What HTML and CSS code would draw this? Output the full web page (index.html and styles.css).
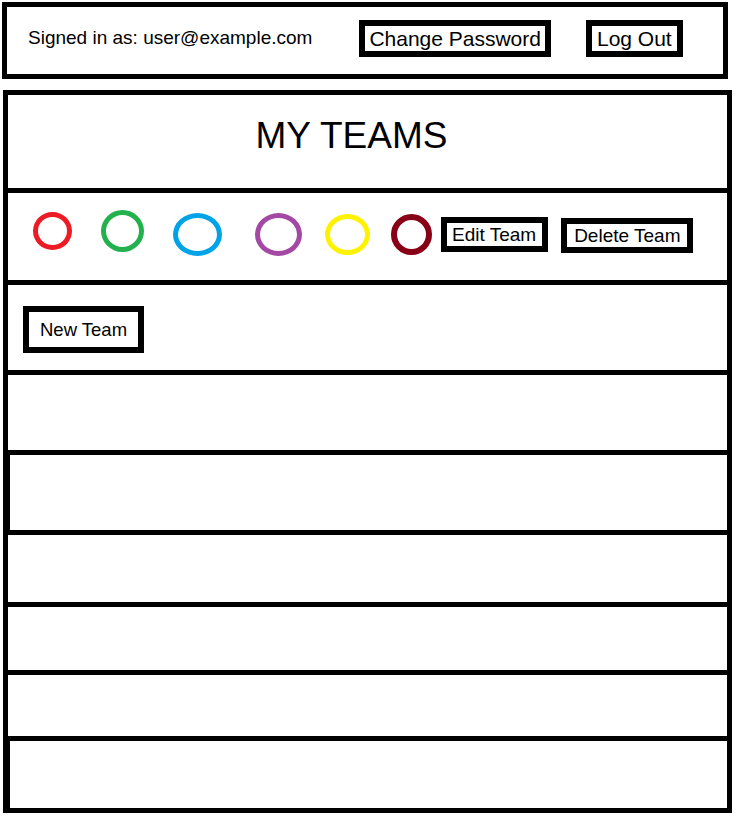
FILE: index.html
```html
<!DOCTYPE html>
<html lang="en">
<head>
  <meta charset="UTF-8">
  <meta name="viewport" content="width=device-width, initial-scale=1.0">
  <title>My Teams</title>
  <link rel="stylesheet" href="styles.css">
</head>
<body>
  <div class="topbar">
    <span class="signed-in">Signed in as: user@example.com</span>
    <button class="btn btn-top change-pw">Change Password</button>
    <button class="btn btn-top logout">Log Out</button>
  </div>

  <div class="teams">
    <div class="row title-row">
      <h1>MY TEAMS</h1>
    </div>

    <div class="row team-row">
      <span class="dot red"></span>
      <span class="dot green"></span>
      <span class="dot blue"></span>
      <span class="dot purple"></span>
      <span class="dot yellow"></span>
      <span class="dot maroon"></span>
      <button class="btn btn-team edit">Edit Team</button>
      <button class="btn btn-team delete">Delete Team</button>
    </div>

    <div class="row new-row">
      <button class="btn btn-new">New Team</button>
    </div>

    <!-- empty team slots -->
    <div class="row slot h75"></div>
    <div class="row slot h75 thick"></div>
    <div class="row slot h67"></div>
    <div class="row slot h63"></div>
    <div class="row slot h61"></div>
    <div class="row slot h67 thick"></div>
  </div>
</body>
</html>
```

FILE: styles.css
```css
/* General */
body {
  margin: 0;
  padding: 0;
  background: #fff;
  color: #000;
  font-family: 'Liberation Sans', Arial, sans-serif;
}

.btn {
  font-family: inherit;
  color: #000;
  background: #fff;
  border: 6px solid #000;
  border-radius: 0;
  margin: 0;
  cursor: pointer;
}

/* Top bar */
.topbar {
  box-sizing: border-box;
  width: 726px;
  height: 77px;
  margin: 2px 0 0 2px;
  padding: 0 0 5px 21px;
  border: 5px solid #000;
  display: flex;
  align-items: center;
}

.signed-in {
  font-size: 19px;
}

.btn-top {
  font-size: 21px;
  line-height: 25px;
  padding: 0 4px;
}

.change-pw {
  margin-left: 47px;
}

.logout {
  margin-left: 35px;
  padding: 0 5px;
}

/* Teams panel */
.teams {
  box-sizing: border-box;
  width: 729px;
  margin: 11px 0 0 3px;
  border: 5px solid #000;
  display: flex;
  flex-direction: column;
}

.row {
  display: flex;
  align-items: center;
  border-top: 5px solid #000;
}

.row:first-child {
  border-top: none;
}

.title-row {
  height: 93px;
  justify-content: center;
  padding: 0 32px 11px 0;
  box-sizing: border-box;
}

h1 {
  margin: 0;
  font-size: 37px;
  font-weight: normal;
}

/* Team colours */
.team-row {
  height: 92px;
  box-sizing: border-box;
  padding-bottom: 5px;
}

.dot {
  box-sizing: border-box;
  border: 5px solid;
  border-radius: 50%;
  flex: none;
}

.red    { width: 39px; height: 38px; border-color: #ed1c24; margin-left: 25px; margin-bottom: 6px; }
.green  { width: 43px; height: 42px; border-color: #22b14c; margin-left: 29px; margin-bottom: 6px; }
.blue   { width: 49px; height: 43px; border-color: #00a2e8; margin-left: 29px; }
.purple { width: 47px; height: 43px; border-color: #a349a4; margin-left: 33px; }
.yellow { width: 45px; height: 41px; border-color: #fff200; margin-left: 23px; margin-top: 1px; }
.maroon { width: 41px; height: 41px; border-color: #880015; margin-left: 21px; margin-top: 1px; border-width: 6px; }

.btn-team {
  font-size: 19px;
  line-height: 23px;
  padding: 0 5px;
}

.edit {
  margin-left: 9px;
  padding: 0 6px 0 5px;
}

.delete {
  margin-left: 13px;
  padding: 0 7px;
  margin-top: 2px;
}

/* New team */
.new-row {
  height: 90px;
  box-sizing: border-box;
  padding: 4px 0 0 15px;
}

.btn-new {
  font-size: 18.5px;
  line-height: 35px;
  padding: 0 11px;
}

/* Empty slots */
.h75 { height: 75px; }
.h67 { height: 67px; }
.h63 { height: 63px; }
.h61 { height: 61px; }

.thick {
  box-shadow: inset 2px 0 0 #000;
}
```
